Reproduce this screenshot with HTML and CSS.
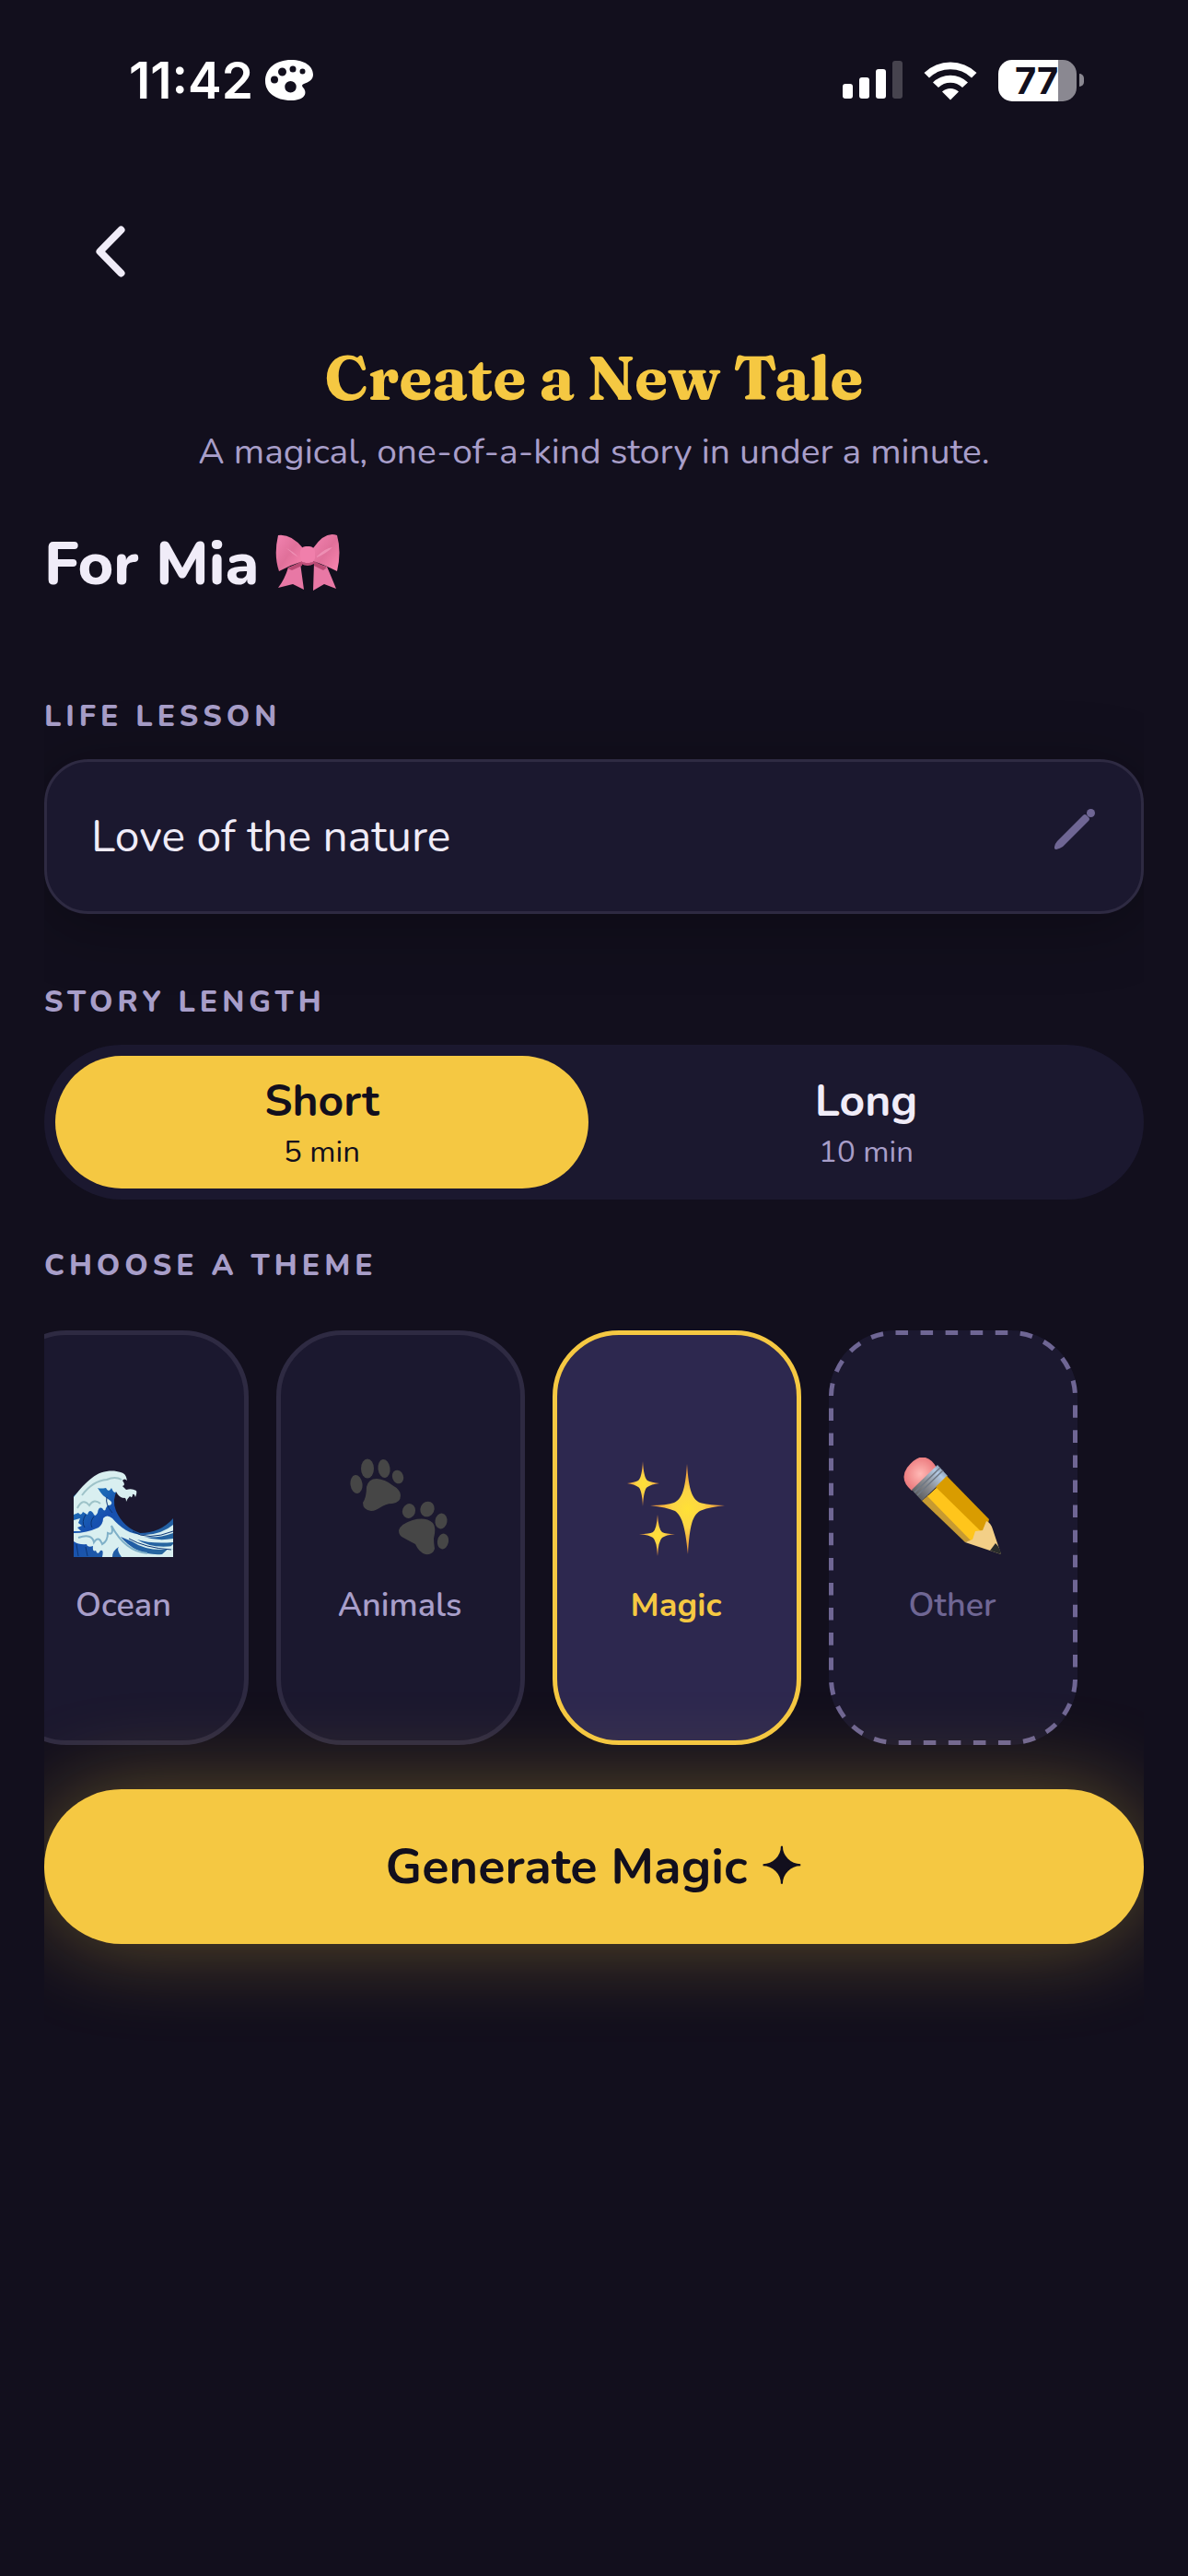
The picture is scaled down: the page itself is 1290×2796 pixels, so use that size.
FILE: index.html
```html
<!DOCTYPE html>
<html lang="en">
<head>
    <meta charset="UTF-8">
    <meta name="viewport" content="width=device-width, initial-scale=1.0">
    <title>Create a New Tale</title>
    <link rel="stylesheet" href="styles.css">
</head>
<body>
    <header class="status-bar">
        <div class="status-left">
            <span class="time">11:42</span>
            <svg class="palette" viewBox="0 0 52 44" aria-hidden="true">
                <path fill="#fff" fill-rule="evenodd" d="M28 0C43 0 52 7 52 16C52 22 47 24 42 26C39 27 40 29 42 31C46 37 42 44 28 44C11 44 0 35 0 23C0 9 12 0 28 0ZM30 6.500a3.500 3.500 0 1 0 0 7a3.500 3.500 0 0 0 0-7ZM18.500 8.500a4.500 4.500 0 1 0 0 9a4.500 4.500 0 0 0 0-9ZM40.500 9.500a3 3 0 1 0 0 6a3 3 0 0 0 0-6ZM10 17.500a4 4 0 1 0 0 8a4 4 0 0 0 0-8ZM27.500 23a6 6 0 1 0 0 12.500a6 6 0 0 0 0-12.500Z"/>
            </svg>
        </div>
        <div class="status-right">
            <svg class="signal" viewBox="0 0 65 42" fill="#fff" aria-hidden="true">
                <rect x="0" y="25" width="11" height="16" rx="3"/>
                <rect x="18" y="18" width="11" height="23" rx="3"/>
                <rect x="36" y="9" width="11" height="32" rx="3"/>
                <rect x="54" y="0" width="11" height="41" rx="3" opacity=".22"/>
            </svg>
            <svg class="wifi" viewBox="0 0 58 43" fill="#fff" aria-hidden="true">
                <path d="M0.500 13A41 41 0 0 1 57.500 13L52 18.500A33 33 0 0 0 6 18.500Z"/>
                <path d="M10 23.500A27 27 0 0 1 48 23.500L42 29A19 19 0 0 0 16 29Z"/>
                <path d="M20 33.500A13 13 0 0 1 38 33.500L29 42.500Z"/>
            </svg>
            <div class="battery">
                <span class="battery-level">77</span>
                <span class="battery-nub"></span>
            </div>
        </div>
    </header>

    <main class="content">
        <button class="back" aria-label="Back">
            <svg viewBox="0 0 34 56" aria-hidden="true">
                <path d="M28.500 4.500L5.500 28L28.500 51.500" fill="none" stroke="#f0ecf8" stroke-width="8" stroke-linecap="round" stroke-linejoin="round"/>
            </svg>
        </button>

        <h1>Create a New Tale</h1>
        <p class="subtitle">A magical, one-of-a-kind story in under a minute.</p>

        <h2>
            For Mia
            <svg class="bow" viewBox="0 0 70 62" aria-hidden="true">
                <defs>
                    <linearGradient id="bowLoop" x1="0" y1="0" x2="1" y2="1">
                        <stop offset="0" stop-color="#f283b0"/>
                        <stop offset=".5" stop-color="#e0709a"/>
                        <stop offset="1" stop-color="#fb86b0"/>
                    </linearGradient>
                </defs>
                <path fill="#e878a5" d="M27 32L31 61L19 55L3 59Q10 50 14 37Z"/>
                <path fill="#e878a5" d="M42 32L56 36Q62 50 66 60L53 55L41 62Z"/>
                <path fill="#b94a73" d="M13 38L29 30V35L18 40ZM56 37L42 30V35L52 40Z"/>
                <path fill="url(#bowLoop)" d="M3 2Q17 0 30 16V30Q17 34 4 41Q-2 24 3 2Z"/>
                <path fill="url(#bowLoop)" d="M67 2Q54-3 41 16V30Q53 34 67 41Q72 20 67 2Z"/>
                <path fill="#f6a3c4" opacity=".6" d="M24 25Q20 20 12 16Q18 22 25 26ZM45 25Q54 16 62 15Q55 22 45 26Z"/>
                <path fill="#c04f7a" d="M28 30Q35 34 42 30V33Q35 37 28 33Z"/>
                <rect x="27" y="14" width="16" height="18" rx="6" fill="#f07fab"/>
            </svg>
        </h2>

        <label class="section-label" for="lesson">LIFE LESSON</label>
        <div class="lesson-box">
            <input type="text" id="lesson" value="Love of the nature">
            <svg class="edit" viewBox="0 0 44 44" fill="#6f6694" aria-hidden="true">
                <path d="M31 7Q33 5 35 7L37 9Q39 11 37 13L9 41Q6 43 2 44Q-.500 44 0 41Q1 37 3 35Z"/>
                <circle cx="39.500" cy="4.500" r="4.500"/>
            </svg>
        </div>

        <div class="section-label length-label" id="lengthLabel">STORY LENGTH</div>
        <div class="segmented" role="group" aria-labelledby="lengthLabel">
            <button class="segment active" aria-pressed="true">
                <span class="segment-name">Short</span>
                <span class="segment-time">5 min</span>
            </button>
            <button class="segment" aria-pressed="false">
                <span class="segment-name">Long</span>
                <span class="segment-time">10 min</span>
            </button>
        </div>

        <div class="section-label theme-label" id="themeLabel">CHOOSE A THEME</div>
        <div class="themes" role="group" aria-labelledby="themeLabel">
            <button class="theme" aria-pressed="false">
                <svg class="theme-icon" viewBox="0 0 108 108" aria-hidden="true">
                    <defs>
                        <linearGradient id="sea" x1="0" y1="0" x2="1" y2="1">
                            <stop offset="0" stop-color="#2389bb"/>
                            <stop offset=".4" stop-color="#164fb0"/>
                            <stop offset="1" stop-color="#2b6b9b"/>
                        </linearGradient>
                    </defs>
                    <path fill="url(#sea)" d="M0 42Q20 22 42 24L48 34Q41 46 46 58Q54 76 72 82Q94 82 108 66V108H0Z"/>
                    <path fill="#d9eff0" d="M0 43C8 33 12 28 20 22C29 14 43 13 51 16Q57 17 58 25Q55 22 53 25Q57 30 53 31L57 35Q63 33 68 36Q69 38 67 43Q66 39 64 40Q64 45 61 42Q58 45 57 48Q57 43 54 44Q49 43 46 37Q44 40 41 33Q38 39 35 33Q29 34 26 33Q31 41 33 42L40 47Q43 50 39 52Q37 50 35 55Q34 60 31 55Q27 53 26 60Q23 66 21 60Q17 55 15 62L10 59Q8 64 5 60L0 62Z"/>
                    <path fill="none" stroke="#9ec3c9" stroke-width="2" d="M9 41Q21 25 36 24Q45 20 52 24M4 55Q10 43 17 52Q22 44 29 50"/>
                    <path fill="#d9eff0" d="M0 82Q14 82 27 76Q32 72 32 66Q36 61 42 66C51 76 60 84 78 84Q96 83 108 73V82Q91 88 76 86Q91 91 108 88V92Q84 94 69 89Q84 99 108 96V99Q81 103 63 91L51 86Q68 107 96 105L108 94V108H52Q46 100 49 97Q42 101 42 108H31Q33 99 29 101Q26 107 24 101Q20 103 21 96Q15 98 14 94Q6 95 0 91Z"/>
                    <path fill="none" stroke="#7fb0c8" stroke-width="2" d="M5 87Q20 82 22 92Q27 84 31 94Q37 91 37 82Q44 85 41 74Q56 102 80 104"/>
                    <path fill="#d9eff0" d="M0 68L7 66L5 71L9 74L4 76L8 80H0Z"/>
                    <path fill="none" stroke="#0b3474" stroke-width="1" d="M13 62Q8 70 12 76M22 64Q17 70 20 76M36 43Q34 51 42 60M64 80Q80 91 108 80M60 88Q77 98 106 100M3 94L5 107M13 97L15 107"/>
                </svg>
                <span class="theme-name">Ocean</span>
            </button>
            <button class="theme" aria-pressed="false">
                <svg class="theme-icon" viewBox="0 0 108 108" fill="#464646" aria-hidden="true">
                    <ellipse cx="7" cy="29" rx="6.500" ry="10" transform="rotate(-8 7 29)"/>
                    <ellipse cx="19" cy="12" rx="7" ry="10.500"/>
                    <ellipse cx="37" cy="12" rx="6.500" ry="10" transform="rotate(-8 37 12)"/>
                    <ellipse cx="52" cy="21" rx="6" ry="7.500" transform="rotate(-20 52 21)"/>
                    <path d="M18 32Q20 23 29 23Q39 24 46 30Q55 35 55 41Q55 49 46 50C35 50 31 58 23 58Q14 57 14 49Q18 43 18 32Z"/>
                    <ellipse cx="64" cy="58" rx="7" ry="8" transform="rotate(20 64 58)"/>
                    <ellipse cx="84" cy="56" rx="7.500" ry="8.500" transform="rotate(25 84 56)"/>
                    <ellipse cx="99" cy="69" rx="6.500" ry="8.500" transform="rotate(10 99 69)"/>
                    <ellipse cx="101" cy="91" rx="6" ry="8.500" transform="rotate(10 101 91)"/>
                    <path d="M53 79Q55 72 68 68Q82 64 90 71Q94 76 91 88Q91 93 92 99Q90 106 82 105Q75 103 71 94Q65 91 58 87Q53 85 53 79Z"/>
                </svg>
                <span class="theme-name">Animals</span>
            </button>
            <button class="theme selected" aria-pressed="true">
                <svg class="theme-icon" viewBox="0 0 108 108" aria-hidden="true">
                    <defs>
                        <radialGradient id="spark">
                            <stop offset="0" stop-color="#ffe136"/>
                            <stop offset=".4" stop-color="#fcd545"/>
                            <stop offset="1" stop-color="#e98a3a"/>
                        </radialGradient>
                    </defs>
                    <g fill="url(#spark)">
                        <path d="M66 7C68 37 72 45 80 49Q89 52 107 52Q89 54 80 58C72 63 69 73 67 105C64 73 60 63 53 58Q44 54 26 52Q44 52 52 49C60 45 64 37 66 7Z"/>
                        <path d="M18 4Q19 22 23 25Q27 27 36 28Q27 29 23 32Q19 34 18 53Q17 34 13 32Q9 29 1 28Q9 27 13 25Q17 22 18 4Z"/>
                        <path d="M34 62Q35 78 39 81Q43 83 53 83Q43 84 39 87Q35 90 34 107Q33 90 29 87Q25 84 14 83Q25 83 29 81Q33 78 34 62Z"/>
                    </g>
                </svg>
                <span class="theme-name">Magic</span>
            </button>
            <button class="theme other" aria-pressed="false">
                <svg class="theme-outline" viewBox="0 0 270 450" aria-hidden="true">
                    <rect x="2.500" y="2.500" width="265" height="445" rx="70" fill="none" stroke="#6f6694" stroke-width="5" pathLength="96" stroke-dasharray="1 1"/>
                </svg>
                <svg class="theme-icon" viewBox="0 0 108 108" aria-hidden="true">
                    <defs>
                        <linearGradient id="ferrule" x1="0" y1="1" x2="1" y2="0">
                            <stop offset="0" stop-color="#494b4e"/>
                            <stop offset=".45" stop-color="#8b8d92"/>
                            <stop offset=".75" stop-color="#b3cae4"/>
                            <stop offset="1" stop-color="#657487"/>
                        </linearGradient>
                        <radialGradient id="rubber">
                            <stop offset="0" stop-color="#ffb9b5"/>
                            <stop offset="1" stop-color="#ed7d80"/>
                        </radialGradient>
                    </defs>
                    <path fill="url(#rubber)" d="M10 36Q-4 24 5 11Q16-3 25 0Q32 2 37 11Z"/>
                    <path fill="url(#ferrule)" d="M38 8L49 20L21 47L10 35Z"/>
                    <path fill="none" stroke="#707985" stroke-width="1.500" d="M41 11L13 38M44 14L16 41"/>
                    <path fill="#c69a32" d="M21 47L28 41L76 90L68 92Z"/>
                    <path fill="#ffc51b" d="M27 42L41 29L88 78L78 90H74Z"/>
                    <path fill="#d99c00" d="M36 32L48 20L94 67L91 79L85 80Z"/>
                    <path fill="#f3cf87" d="M68 92L76 89L79 80L87 79L91 69Q96 71 98 78L107 105Z"/>
                    <path fill="#292c2b" d="M95 101L101 93Q106 98 107 105Z"/>
                </svg>
                <span class="theme-name">Other</span>
            </button>
        </div>

        <button class="generate">Generate Magic <span class="star">✦</span></button>
    </main>
</body>
</html>
```
FILE: styles.css
```css
* {
    box-sizing: border-box;
}

body {
    font-family: 'Nunito', 'Lato', sans-serif;
    margin: 0;
    min-height: 100vh;
    background-color: #120f1d;
    color: #f0ecf8;
}

button,
input {
    font-family: inherit;
    color: inherit;
    border: none;
    background: none;
    padding: 0;
    margin: 0;
}

button {
    cursor: pointer;
}

svg {
    display: block;
}

/* Status bar */
.status-bar {
    display: flex;
    justify-content: space-between;
    padding: 60px 113px 0 140px;
    font-family: 'Inter', sans-serif;
    font-weight: 600;
    color: #fff;
}

.status-left,
.status-right {
    display: flex;
    align-items: center;
    height: 54px;
}

.status-left {
    gap: 13px;
}

.status-right {
    gap: 23px;
}

.time {
    font-size: 55px;
    line-height: 54px;
}

.palette {
    width: 52px;
    height: 44px;
}

.signal {
    width: 65px;
    height: 42px;
}

.wifi {
    width: 58px;
    height: 43px;
}

.battery {
    display: flex;
    align-items: center;
    gap: 3px;
}

.battery-level {
    width: 85px;
    height: 45px;
    padding-left: 18px;
    border-radius: 15px;
    background: linear-gradient(to right, #fff 65px, #8a8891 65px);
    color: #120f1d;
    font-size: 40px;
    font-weight: 700;
    line-height: 46px;
}

.battery-nub {
    width: 5px;
    height: 14px;
    border-radius: 0 7px 7px 0;
    background-color: #8a8891;
}

/* Page */
.content {
    display: flex;
    flex-direction: column;
    margin: 111px 48px 0;
    overflow-x: clip;
}

.back {
    display: flex;
    align-items: center;
    justify-content: center;
    width: 96px;
    height: 96px;
    margin-left: 24px;
}

.back svg {
    width: 34px;
    height: 56px;
}

h1 {
    margin: 47px 0 0;
    font-family: 'Fraunces', 'Liberation Serif', serif;
    font-size: 66px;
    font-weight: 700;
    line-height: 84px;
    text-align: center;
    color: #f5c842;
}

.subtitle {
    margin: 12px 0 0;
    font-size: 39px;
    line-height: 54px;
    text-align: center;
    color: #a89ec9;
}

h2 {
    display: flex;
    align-items: center;
    gap: 18px;
    margin: 54px 0 0;
    font-size: 66px;
    font-weight: 800;
    line-height: 80px;
}

.bow {
    width: 70px;
    height: 62px;
    margin-bottom: 4px;
}

.section-label {
    margin-top: 105px;
    font-size: 32px;
    font-weight: 800;
    line-height: 42px;
    letter-spacing: 5px;
    color: #a89ec9;
}

.length-label {
    margin-top: 75px;
}

.theme-label {
    margin-top: 51px;
}

.lesson-box {
    display: flex;
    align-items: center;
    height: 168px;
    margin-top: 25px;
    padding: 0 50px 0 48px;
    border: 3px solid #2e2a42;
    border-radius: 48px;
    background-color: #1b182f;
    box-shadow: 0 12px 72px rgba(0, 0, 0, 0.3);
}

.lesson-box input {
    flex: 1;
    min-width: 0;
    font-size: 48px;
    line-height: 60px;
    outline: none;
}

.edit {
    width: 44px;
    height: 44px;
    margin-bottom: 16px;
}

.segmented {
    display: flex;
    gap: 12px;
    margin-top: 25px;
    padding: 12px;
    border-radius: 84px;
    background-color: #1b182f;
}

.segment {
    display: flex;
    flex: 1;
    flex-direction: column;
    align-items: center;
    justify-content: center;
    height: 144px;
    padding-top: 6px;
    border-radius: 72px;
}

.segment-name {
    font-size: 48px;
    font-weight: 700;
    line-height: 60px;
}

.segment-time {
    font-size: 33px;
    line-height: 52px;
    color: #a89ec9;
}

.segment.active {
    background-color: #f5c842;
    color: #120f1d;
}

.segment.active .segment-time {
    color: #120f1d;
}

/* Theme list, scrolled to its end */
.themes {
    display: flex;
    justify-content: flex-end;
    gap: 30px;
    margin-top: 49px;
    padding-right: 72px;
    overflow: hidden;
}

.theme {
    position: relative;
    display: flex;
    flex: none;
    flex-direction: column;
    align-items: center;
    justify-content: center;
    gap: 29px;
    width: 270px;
    height: 450px;
    padding: 10px 2px 0 0;
    border: 5px solid #2e2a42;
    border-radius: 72px;
    background-color: #1b182f;
    color: #a89ec9;
}

.theme-icon {
    width: 108px;
    height: 108px;
}

.theme-name {
    font-size: 36px;
    font-weight: 600;
    line-height: 48px;
}

.theme.selected {
    border-color: #f5c842;
    background-color: #2d284f;
    color: #f5c842;
}

.theme.selected .theme-name {
    font-weight: 700;
}

.theme.other {
    border-color: transparent;
    color: #6f6694;
}

.theme-outline {
    position: absolute;
    inset: -5px;
}

.generate {
    position: relative;
    height: 168px;
    margin-top: 48px;
    border-radius: 84px;
    background-color: #f5c842;
    box-shadow: 0 0 96px rgba(245, 200, 66, 0.35);
    color: #120f1d;
    font-size: 54px;
    font-weight: 700;
    line-height: 66px;
}

.star {
    font-family: 'DejaVu Sans', sans-serif;
    -webkit-text-stroke: 2px #120f1d;
}
```
